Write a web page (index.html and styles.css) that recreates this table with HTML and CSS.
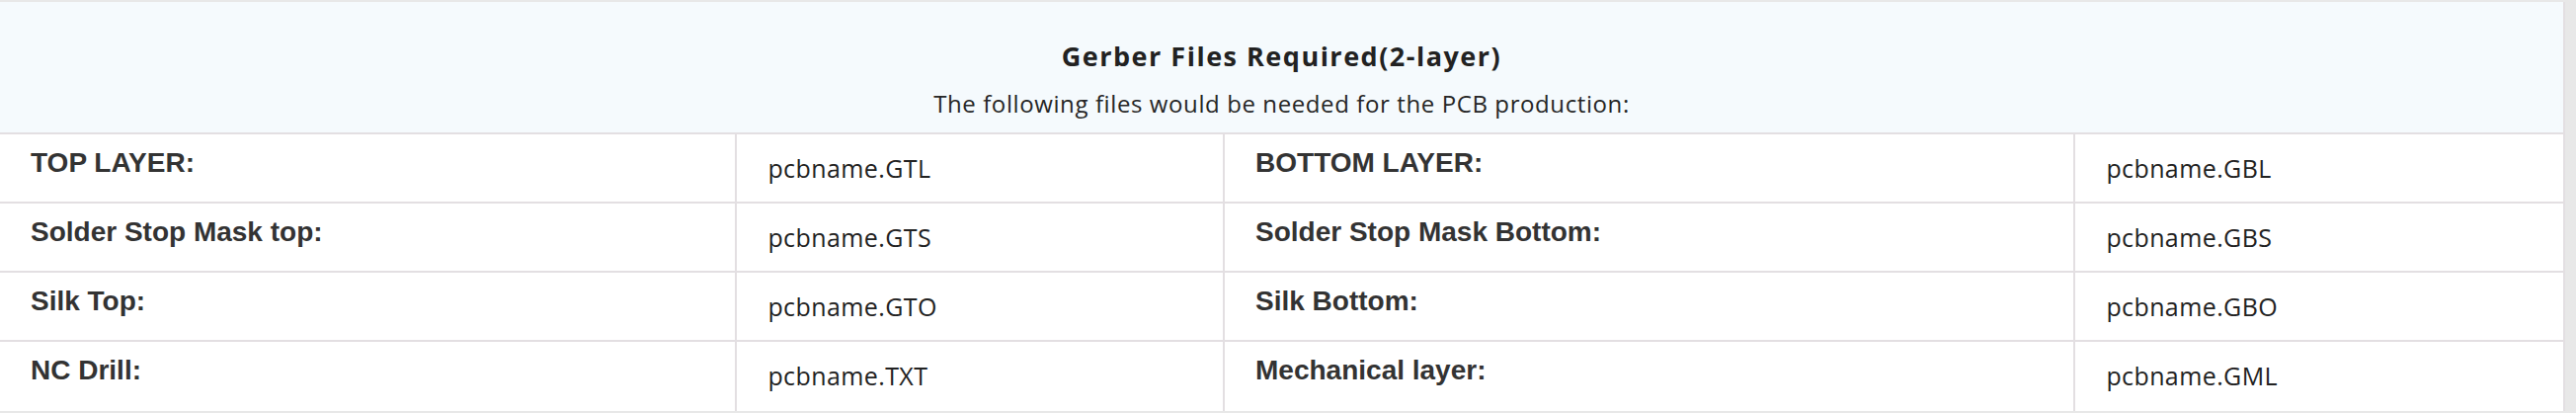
FILE: index.html
```html
<!DOCTYPE html>
<html lang="en">
<head>
<meta charset="utf-8">
<title>Gerber Files Required</title>
<link rel="stylesheet" href="styles.css">
</head>
<body>
<div class="page">
  <section class="gerber">
    <header class="gerber-head">
      <h2 class="gerber-title">Gerber Files Required(2-layer)</h2>
      <p class="gerber-sub">The following files would be needed for the PCB production:</p>
    </header>
    <div class="gerber-grid">
      <div class="cell label">TOP LAYER:</div>
      <div class="cell value">pcbname.GTL</div>
      <div class="cell label">BOTTOM LAYER:</div>
      <div class="cell value">pcbname.GBL</div>

      <div class="cell label">Solder Stop Mask top:</div>
      <div class="cell value">pcbname.GTS</div>
      <div class="cell label">Solder Stop Mask Bottom:</div>
      <div class="cell value">pcbname.GBS</div>

      <div class="cell label">Silk Top:</div>
      <div class="cell value">pcbname.GTO</div>
      <div class="cell label">Silk Bottom:</div>
      <div class="cell value">pcbname.GBO</div>

      <div class="cell label">NC Drill:</div>
      <div class="cell value">pcbname.TXT</div>
      <div class="cell label">Mechanical layer:</div>
      <div class="cell value">pcbname.GML</div>
    </div>
  </section>
</div>
</body>
</html>
```

FILE: styles.css
```css
* {
  box-sizing: border-box;
}

html, body {
  margin: 0;
  padding: 0;
  background: #e8e8e8;
}

.page {
  padding: 2px 11px 2px 0;
}

.gerber {
  background: #ffffff;
  border-right: 2px solid #e3dfe2;
}

.gerber-head {
  background: #f5fafd;
  border-bottom: 2px solid #e3dfe2;
  height: 134px;
  padding-top: 38px;
  display: flex;
  flex-direction: column;
  align-items: center;
  font-family: "Open Sans", "Noto Sans", sans-serif;
}

.gerber-title {
  margin: 0;
  font-size: 27px;
  line-height: 34px;
  font-weight: 700;
  letter-spacing: 1.5px;
  color: #222222;
}

.gerber-sub {
  margin: 16px 0 0;
  font-size: 24px;
  line-height: 30px;
  font-weight: 400;
  letter-spacing: 0.6px;
  color: #262626;
}

.gerber-grid {
  display: grid;
  grid-template-columns: 747fr 494fr 862fr 494fr;
  grid-auto-rows: 70px;
}

.cell {
  border-bottom: 2px solid #e3dfe2;
  border-right: 2px solid #e3dfe2;
  padding-left: 31px;
  padding-right: 20px;
  white-space: nowrap;
}

.cell:nth-child(4n) {
  border-right: none;
}

.cell:nth-last-child(-n+4) {
  border-bottom: none;
}

.label {
  padding-top: 13px;
  font-family: "Liberation Sans", Arial, sans-serif;
  font-weight: 700;
  font-size: 28px;
  line-height: 32px;
  color: #333333;
}

.value {
  padding-top: 18px;
  font-family: "Open Sans", "Noto Sans", sans-serif;
  font-size: 25px;
  line-height: 32px;
  letter-spacing: 0.4px;
  color: #222222;
}
```
